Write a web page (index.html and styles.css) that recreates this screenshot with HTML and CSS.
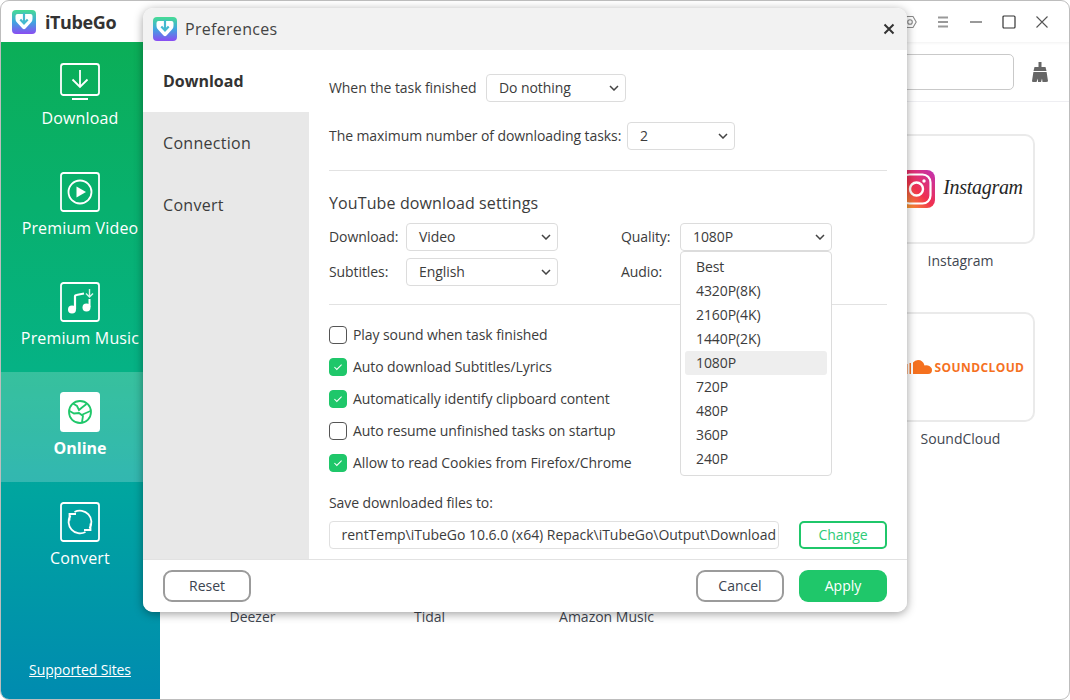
FILE: index.html
```html
<!DOCTYPE html>
<html lang="en">
<head>
  <meta charset="UTF-8">
  <title>iTubeGo</title>
  <link rel="stylesheet" href="styles.css">
</head>
<body>
  <svg class="defs" width="0" height="0">
    <defs>
      <linearGradient id="logoFill" x1="0" y1="0" x2="0" y2="1">
        <stop offset="0" stop-color="#46dc94"/>
        <stop offset="0.5" stop-color="#3fa6e0"/>
        <stop offset="1" stop-color="#8a4cf2"/>
      </linearGradient>
      <linearGradient id="instaFill" x1="0" y1="1" x2="1" y2="0">
        <stop offset="0" stop-color="#fdc122"/>
        <stop offset="0.5" stop-color="#f0304f"/>
        <stop offset="1" stop-color="#c032b5"/>
      </linearGradient>
      <symbol id="logo" viewBox="0 0 24 24">
        <rect width="24" height="24" rx="4" fill="url(#logoFill)"/>
        <path d="M3.500 6Q3.500 4 5.500 4H18.500Q20.500 4 20.500 6V9Q20.500 11 19 12.500L13.500 18.500Q12 20 10.500 18.500L5 12.500Q3.500 11 3.500 9Z" fill="#fff"/>
        <path d="M12 3V13M8.300 9.500L12 13.500L15.700 9.500" fill="none" stroke="#45b9cf" stroke-width="2.200"/>
      </symbol>
    </defs>
  </svg>

  <div class="window">
    <header class="topbar">
      <svg class="brand-logo"><use href="#logo"/></svg>
      <span class="brand-name">iTubeGo</span>
      <div class="win-controls">
        <svg class="ctl" viewBox="0 0 16 16" fill="none" stroke="#8a8a8a" stroke-width="1.100"><path d="M5 2.500H11L14.200 8L11 13.500H5L1.800 8Z"/><circle cx="8" cy="8" r="2.300"/></svg>
        <svg class="ctl" viewBox="0 0 16 16" stroke="#999" stroke-width="1.800"><path d="M3 3.500H13M3 8H13M3 12.500H13"/></svg>
        <svg class="ctl" viewBox="0 0 16 16" stroke="#999" stroke-width="1.800"><path d="M2 8H14"/></svg>
        <svg class="ctl" viewBox="0 0 16 16" fill="none" stroke="#333" stroke-width="1.200"><rect x="2" y="2" width="12" height="12" rx="1"/></svg>
        <svg class="ctl" viewBox="0 0 16 16" stroke="#555" stroke-width="1.100"><path d="M2.500 2.500L13.500 13.500M13.500 2.500L2.500 13.500"/></svg>
      </div>
    </header>

    <div class="shell">
      <nav class="sidebar">
        <a class="side-item">
          <svg class="side-icon" viewBox="0 0 40 40" fill="none" stroke="#fff" stroke-width="1.800">
            <rect x="1" y="2" width="38" height="31" rx="2.500"/>
            <path d="M20 8V25M12.500 17.500L20 25L27.500 17.500M12 37H28"/>
          </svg>
          <span>Download</span>
        </a>
        <a class="side-item">
          <svg class="side-icon" viewBox="0 0 40 40" fill="none" stroke="#fff" stroke-width="1.800">
            <rect x="1" y="1" width="38" height="38" rx="2.500"/>
            <circle cx="20" cy="20" r="11.500"/>
            <path d="M16.500 14.500L26 20L16.500 25.500Z" fill="#fff" stroke="none"/>
          </svg>
          <span>Premium Video</span>
        </a>
        <a class="side-item">
          <svg class="side-icon" viewBox="0 0 40 40" fill="none" stroke="#fff" stroke-width="1.800">
            <rect x="1" y="1" width="38" height="38" rx="2.500"/>
            <circle cx="12" cy="27.500" r="4" fill="#fff" stroke="none"/>
            <circle cx="26.500" cy="25.500" r="4" fill="#fff" stroke="none"/>
            <path d="M15 27V14.500Q15 13 16.500 13L24 11.500" stroke-width="2.200"/>
            <path d="M29.500 25V17" stroke-width="2"/>
            <path d="M29.500 7V15M26 11.500L29.500 15L33 11.500" stroke="#d8f5ea" stroke-width="1.400"/>
          </svg>
          <span>Premium Music</span>
        </a>
        <a class="side-item active">
          <svg class="side-icon" viewBox="0 0 40 40" fill="none">
            <rect width="40" height="40" rx="3.500" fill="#fff"/>
            <circle cx="20" cy="20" r="11" stroke="#1fc76a" stroke-width="1.800"/>
            <path d="M13 11.500L17 14L19 18L22 15.500L26.500 12M9.500 19L14 21.500L19 21L23 24L22 30M22.500 22.500L30.500 19" stroke="#1fc76a" stroke-width="1.800"/>
          </svg>
          <span>Online</span>
        </a>
        <a class="side-item">
          <svg class="side-icon" viewBox="0 0 40 40" fill="none" stroke="#fff" stroke-width="1.800">
            <rect x="1" y="1" width="38" height="38" rx="2.500"/>
            <path d="M14.500 10A11.500 11.500 0 0 1 29.500 26.500"/>
            <path d="M30.500 21.500V28H24"/>
            <path d="M25.500 30A11.500 11.500 0 0 1 10.500 13.500"/>
            <path d="M9.500 18.500V12H16"/>
          </svg>
          <span>Convert</span>
        </a>
        <a class="side-link">Supported Sites</a>
      </nav>

      <main class="main">
        <div class="searchbar">
          <div class="search-box"></div>
          <svg class="broom" viewBox="0 0 16 20" fill="#666">
            <path d="M6.500 0H9.500V5H13.500L14.500 9H1.500L2.500 5H6.500Z"/>
            <path d="M1.400 10H14.600L16 19Q16 20 14 20H10.500L10 16.500L9 20H6L6 16.500L4.500 20H1Q0 20 0 19Z"/>
          </svg>
        </div>

        <div class="sites">
          <div class="site"><div class="card"></div></div>
          <div class="site"><div class="card"></div></div>
          <div class="site"><div class="card"></div></div>
          <div class="site"><div class="card"></div></div>
          <div class="site">
            <div class="card">
              <svg class="insta-icon" viewBox="0 0 38 38" fill="none">
                <rect width="38" height="38" rx="8" fill="url(#instaFill)"/>
                <rect x="4.500" y="4.500" width="29" height="29" rx="8" stroke="#fff" stroke-width="2.200"/>
                <circle cx="19.500" cy="19" r="6.500" stroke="#fff" stroke-width="2.400"/>
                <circle cx="27" cy="11" r="1.700" fill="#fff"/>
              </svg>
              <span class="insta-word">Instagram</span>
            </div>
            <p class="site-name">Instagram</p>
          </div>
          <div class="site"><div class="card"></div></div>
          <div class="site"><div class="card"></div></div>
          <div class="site"><div class="card"></div></div>
          <div class="site"><div class="card"></div></div>
          <div class="site">
            <div class="card">
              <svg class="sc-icon" viewBox="0 0 36 14" fill="#f5711f">
                <path d="M17 14V2.500Q19 0 22 0Q27 0 28.500 5.500Q30 5 32 5.500Q36 7 36 10Q36 14 32 14Z"/>
                <path d="M13.500 14V3H15V14ZM10 14V4H11.500V14ZM6.500 14V5H8V14ZM3 14V6H4.500V14Z"/>
              </svg>
              <span class="sc-word">SOUNDCLOUD</span>
            </div>
            <p class="site-name">SoundCloud</p>
          </div>
          <div class="site"><div class="card"></div><p class="site-name">Deezer</p></div>
          <div class="site"><div class="card"></div><p class="site-name">Tidal</p></div>
          <div class="site"><div class="card"></div><p class="site-name">Amazon Music</p></div>
        </div>
      </main>
    </div>
  </div>

  <!-- Preferences dialog -->
  <section class="dialog">
    <header class="dialog-head">
      <svg class="dialog-logo"><use href="#logo"/></svg>
      <span class="dialog-title">Preferences</span>
      <svg class="dialog-close" viewBox="0 0 12 12" stroke="#333" stroke-width="2"><path d="M1.500 1.500L10.500 10.500M10.500 1.500L1.500 10.500"/></svg>
    </header>

    <div class="dialog-body">
      <aside class="tabs">
        <div class="tab active">Download</div>
        <div class="tab">Connection</div>
        <div class="tab">Convert</div>
      </aside>

      <div class="panel">
        <div class="row row-first">
          <label>When the task finished</label>
          <div class="select select-task"><span>Do nothing</span><svg class="chev" viewBox="0 0 10 6"><path d="M1 1L5 5L9 1"/></svg></div>
        </div>
        <div class="row row-second">
          <label>The maximum number of downloading tasks:</label>
          <div class="select select-count"><span>2</span><svg class="chev" viewBox="0 0 10 6"><path d="M1 1L5 5L9 1"/></svg></div>
        </div>

        <hr class="rule rule-one">

        <h3 class="section-title">YouTube download settings</h3>
        <div class="yt-grid">
          <label>Download:</label>
          <div class="select"><span>Video</span><svg class="chev" viewBox="0 0 10 6"><path d="M1 1L5 5L9 1"/></svg></div>
          <label class="right-label">Quality:</label>
          <div class="select-wrap">
            <div class="select"><span>1080P</span><svg class="chev" viewBox="0 0 10 6"><path d="M1 1L5 5L9 1"/></svg></div>
            <ul class="dropdown">
              <li>Best</li>
              <li>4320P(8K)</li>
              <li>2160P(4K)</li>
              <li>1440P(2K)</li>
              <li class="current">1080P</li>
              <li>720P</li>
              <li>480P</li>
              <li>360P</li>
              <li>240P</li>
            </ul>
          </div>
          <label>Subtitles:</label>
          <div class="select"><span>English</span><svg class="chev" viewBox="0 0 10 6"><path d="M1 1L5 5L9 1"/></svg></div>
          <label class="right-label">Audio:</label>
          <div></div>
        </div>

        <hr class="rule rule-two">

        <div class="checks">
          <div class="check"><span class="box"></span>Play sound when task finished</div>
          <div class="check"><span class="box on"><svg viewBox="0 0 12 10"><path d="M1.500 5L4.500 8L10.500 2"/></svg></span>Auto download Subtitles/Lyrics</div>
          <div class="check"><span class="box on"><svg viewBox="0 0 12 10"><path d="M1.500 5L4.500 8L10.500 2"/></svg></span>Automatically identify clipboard content</div>
          <div class="check"><span class="box"></span>Auto resume unfinished tasks on startup</div>
          <div class="check"><span class="box on"><svg viewBox="0 0 12 10"><path d="M1.500 5L4.500 8L10.500 2"/></svg></span>Allow to read Cookies from Firefox/Chrome</div>
        </div>

        <p class="save-label">Save downloaded files to:</p>
        <div class="save-row">
          <div class="path">rentTemp\iTubeGo 10.6.0 (x64) Repack\iTubeGo\Output\Download</div>
          <button class="btn btn-outline">Change</button>
        </div>
      </div>
    </div>

    <footer class="dialog-foot">
      <button class="btn btn-gray">Reset</button>
      <div class="foot-right">
        <button class="btn btn-gray">Cancel</button>
        <button class="btn btn-green">Apply</button>
      </div>
    </footer>
  </section>
</body>
</html>
```

FILE: styles.css
```css
* {
  box-sizing: border-box;
}
body {
  margin: 0;
  width: 1070px;
  height: 700px;
  overflow: hidden;
  position: relative;
  font-family: "Open Sans", "Noto Sans", sans-serif;
  font-size: 14px;
  color: #3c3c3c;
  background: #fff;
}
.defs {
  position: absolute;
}
.window {
  width: 1070px;
  height: 700px;
  border: 1px solid #bdbdbd;
  border-radius: 9px;
  overflow: hidden;
  display: flex;
  flex-direction: column;
  background: #fff;
}

/* title bar */
.topbar {
  height: 41px;
  flex: none;
  display: flex;
  align-items: center;
  padding-left: 11px;
}
.brand-logo {
  width: 24px;
  height: 24px;
}
.brand-name {
  margin-left: 9px;
  font-size: 18px;
  font-weight: 700;
  letter-spacing: -0.4px;
  color: #333;
}
.win-controls {
  margin-left: auto;
  margin-right: 19px;
  display: flex;
  gap: 17px;
}
.ctl {
  width: 16px;
  height: 16px;
}

.shell {
  flex: 1;
  display: flex;
  min-height: 0;
}

/* left menu */
.sidebar {
  width: 159px;
  flex: none;
  display: flex;
  flex-direction: column;
  color: #fff;
  background: linear-gradient(180deg, #0bae57 0%, #05b285 50%, #00a59f 68%, #008bb0 100%);
}
.side-item {
  height: 110px;
  flex: none;
  display: flex;
  flex-direction: column;
  align-items: center;
  padding: 20px 1px 0 0;
  font-size: 16px;
  line-height: 22px;
  letter-spacing: 0.15px;
}
.side-item span {
  margin-top: 5px;
  white-space: nowrap;
}
.side-item.active {
  background: rgba(255, 255, 255, 0.2);
  font-weight: 700;
  letter-spacing: 0;
}
.side-icon {
  width: 40px;
  height: 40px;
  flex: none;
}
.side-link {
  margin-top: auto;
  margin-bottom: 19px;
  padding-right: 1px;
  text-align: center;
  font-size: 14px;
  line-height: 20px;
  letter-spacing: -0.1px;
  text-decoration: underline;
}

/* page behind the dialog */
.main {
  flex: 1;
  min-width: 0;
}
.searchbar {
  height: 60px;
  display: flex;
  align-items: center;
  justify-content: flex-end;
  padding-right: 21px;
  border-bottom: 1px solid #eeeef2;
  box-shadow: inset 0 3px 3px -2px rgba(0, 0, 0, 0.06);
}
.search-box {
  width: 400px;
  height: 36px;
  margin-right: 18px;
  border: 1px solid #c9c9c9;
  border-radius: 5px;
}
.broom {
  width: 16px;
  height: 20px;
}
.sites {
  display: grid;
  grid-template-columns: repeat(5, 150px);
  column-gap: 27px;
  row-gap: 41px;
  padding: 32px 0 0 17px;
}
.card {
  height: 110px;
  border: 2px solid #eaeaea;
  border-radius: 10px;
  display: flex;
  align-items: center;
  justify-content: center;
}
.site-name {
  margin: 7px 0 0;
  padding-left: 1px;
  height: 20px;
  line-height: 20px;
  text-align: center;
  color: #3f4650;
  white-space: nowrap;
}
.insta-icon {
  width: 38px;
  height: 38px;
  flex: none;
}
.insta-word {
  margin-left: 8px;
  padding-bottom: 4px;
  font-family: "Liberation Serif", serif;
  font-style: italic;
  font-size: 20px;
  letter-spacing: -0.3px;
  color: #262626;
}
.sc-icon {
  width: 36px;
  height: 14px;
  flex: none;
}
.sc-word {
  margin-left: 3px;
  font-size: 12px;
  font-weight: 700;
  letter-spacing: 0.4px;
  color: #f5711f;
}

/* preferences dialog */
.dialog {
  position: absolute;
  left: 143px;
  top: 8px;
  width: 764px;
  height: 604px;
  display: flex;
  flex-direction: column;
  background: #fff;
  border-radius: 10px;
  box-shadow: 0 2px 10px rgba(0, 0, 0, 0.38);
  overflow: hidden;
}
.dialog-head {
  height: 42px;
  flex: none;
  display: flex;
  align-items: center;
  padding: 0 12px 0 10px;
  background: #f2f2f2;
}
.dialog-logo {
  width: 24px;
  height: 24px;
}
.dialog-title {
  margin-left: 8px;
  font-size: 16px;
  letter-spacing: 0.3px;
  color: #444;
}
.dialog-close {
  margin-left: auto;
  width: 12px;
  height: 12px;
}
.dialog-body {
  flex: 1;
  display: flex;
  min-height: 0;
}
.tabs {
  width: 166px;
  flex: none;
  background: #e8e8e8;
}
.tab {
  height: 62px;
  padding-left: 20px;
  line-height: 62px;
  font-size: 16px;
  letter-spacing: 0.3px;
}
.tab.active {
  background: #fff;
  font-weight: 700;
  letter-spacing: 0;
  color: #333;
}
.panel {
  flex: 1;
  padding: 0 20px;
  min-width: 0;
  letter-spacing: -0.08px;
}
.panel label {
  padding-bottom: 2px;
}
.row {
  display: flex;
  align-items: center;
  gap: 8px;
  height: 28px;
}
.row label {
  flex: none;
  white-space: nowrap;
}
.row-first {
  margin-top: 24px;
}
.row-first label {
  width: 149px;
}
.row-second {
  margin-top: 20px;
}
.row-second label {
  width: 290px;
}
.select {
  height: 28px;
  display: flex;
  align-items: center;
  justify-content: space-between;
  padding: 0 5px 2px 12px;
  background: #fff;
  border: 1px solid #dcdcdc;
  border-radius: 4px;
}
.select-task {
  width: 140px;
}
.select-count {
  width: 108px;
}
.chev {
  width: 10px;
  height: 6px;
  margin: 2px 1px 0 0;
  fill: none;
  stroke: #444;
  stroke-width: 1.500;
}
.rule {
  margin: 0;
  border: 0;
  border-top: 1px solid #e2e2e2;
}
.rule-one {
  margin-top: 20px;
}
.section-title {
  margin: 21px 0 0;
  height: 22px;
  line-height: 22px;
  font-size: 16px;
  font-weight: 400;
  letter-spacing: 0.12px;
}
.yt-grid {
  margin-top: 9px;
  display: grid;
  grid-template-columns: 77px 152px 122px 152px;
  row-gap: 7px;
  align-items: center;
}
.right-label {
  margin-left: 63px;
  white-space: nowrap;
}
.select-wrap {
  position: relative;
}
.dropdown {
  position: absolute;
  left: 0;
  top: 28px;
  z-index: 2;
  width: 152px;
  height: 225px;
  margin: 0;
  padding: 3px 4px 0;
  list-style: none;
  background: #fff;
  border: 1px solid #dcdcdc;
  border-radius: 4px;
}
.dropdown li {
  height: 24px;
  line-height: 24px;
  padding-left: 11px;
  border-radius: 3px;
}
.dropdown .current {
  background: #eeeeee;
}
.rule-two {
  margin-top: 18px;
}
.checks {
  margin-top: 20px;
  display: flex;
  flex-direction: column;
  gap: 12px;
}
.check {
  height: 20px;
  padding-bottom: 2px;
  display: flex;
  align-items: center;
  gap: 6px;
}
.box {
  width: 18px;
  height: 18px;
  flex: none;
  margin-top: 2px;
  display: flex;
  align-items: center;
  justify-content: center;
  border: 1px solid #555;
  border-radius: 4px;
}
.box.on {
  background: #1fc76a;
  border-color: #1fc76a;
}
.box svg {
  width: 10px;
  height: 8px;
  fill: none;
  stroke: #fff;
  stroke-width: 1.300;
}
.save-label {
  margin: 20px 0 0;
  height: 20px;
  line-height: 20px;
}
.save-row {
  margin-top: 8px;
  display: flex;
  justify-content: space-between;
}
.path {
  width: 450px;
  height: 28px;
  padding-right: 2px;
  line-height: 26px;
  letter-spacing: -0.03px;
  text-align: right;
  border: 1px solid #e0e0e0;
  border-radius: 4px;
  white-space: nowrap;
}
.btn {
  width: 88px;
  height: 32px;
  padding: 0 0 2px;
  font-family: inherit;
  font-size: 14px;
  color: #3c4450;
  background: #fff;
  border-radius: 9px;
}
.btn-outline {
  height: 28px;
  color: #2ecb76;
  border: 2px solid #1fc76a;
  border-radius: 5px;
}
.btn-gray {
  border: 2px solid #9b9b9b;
}
.btn-green {
  color: #fff;
  background: #1fc76a;
  border: 0;
}
.dialog-foot {
  height: 53px;
  flex: none;
  display: flex;
  justify-content: space-between;
  align-items: flex-start;
  padding: 10px 20px 0;
  background: #fff;
  border-top: 1px solid #e2e2e2;
}
.foot-right {
  display: flex;
  gap: 15px;
}
```
